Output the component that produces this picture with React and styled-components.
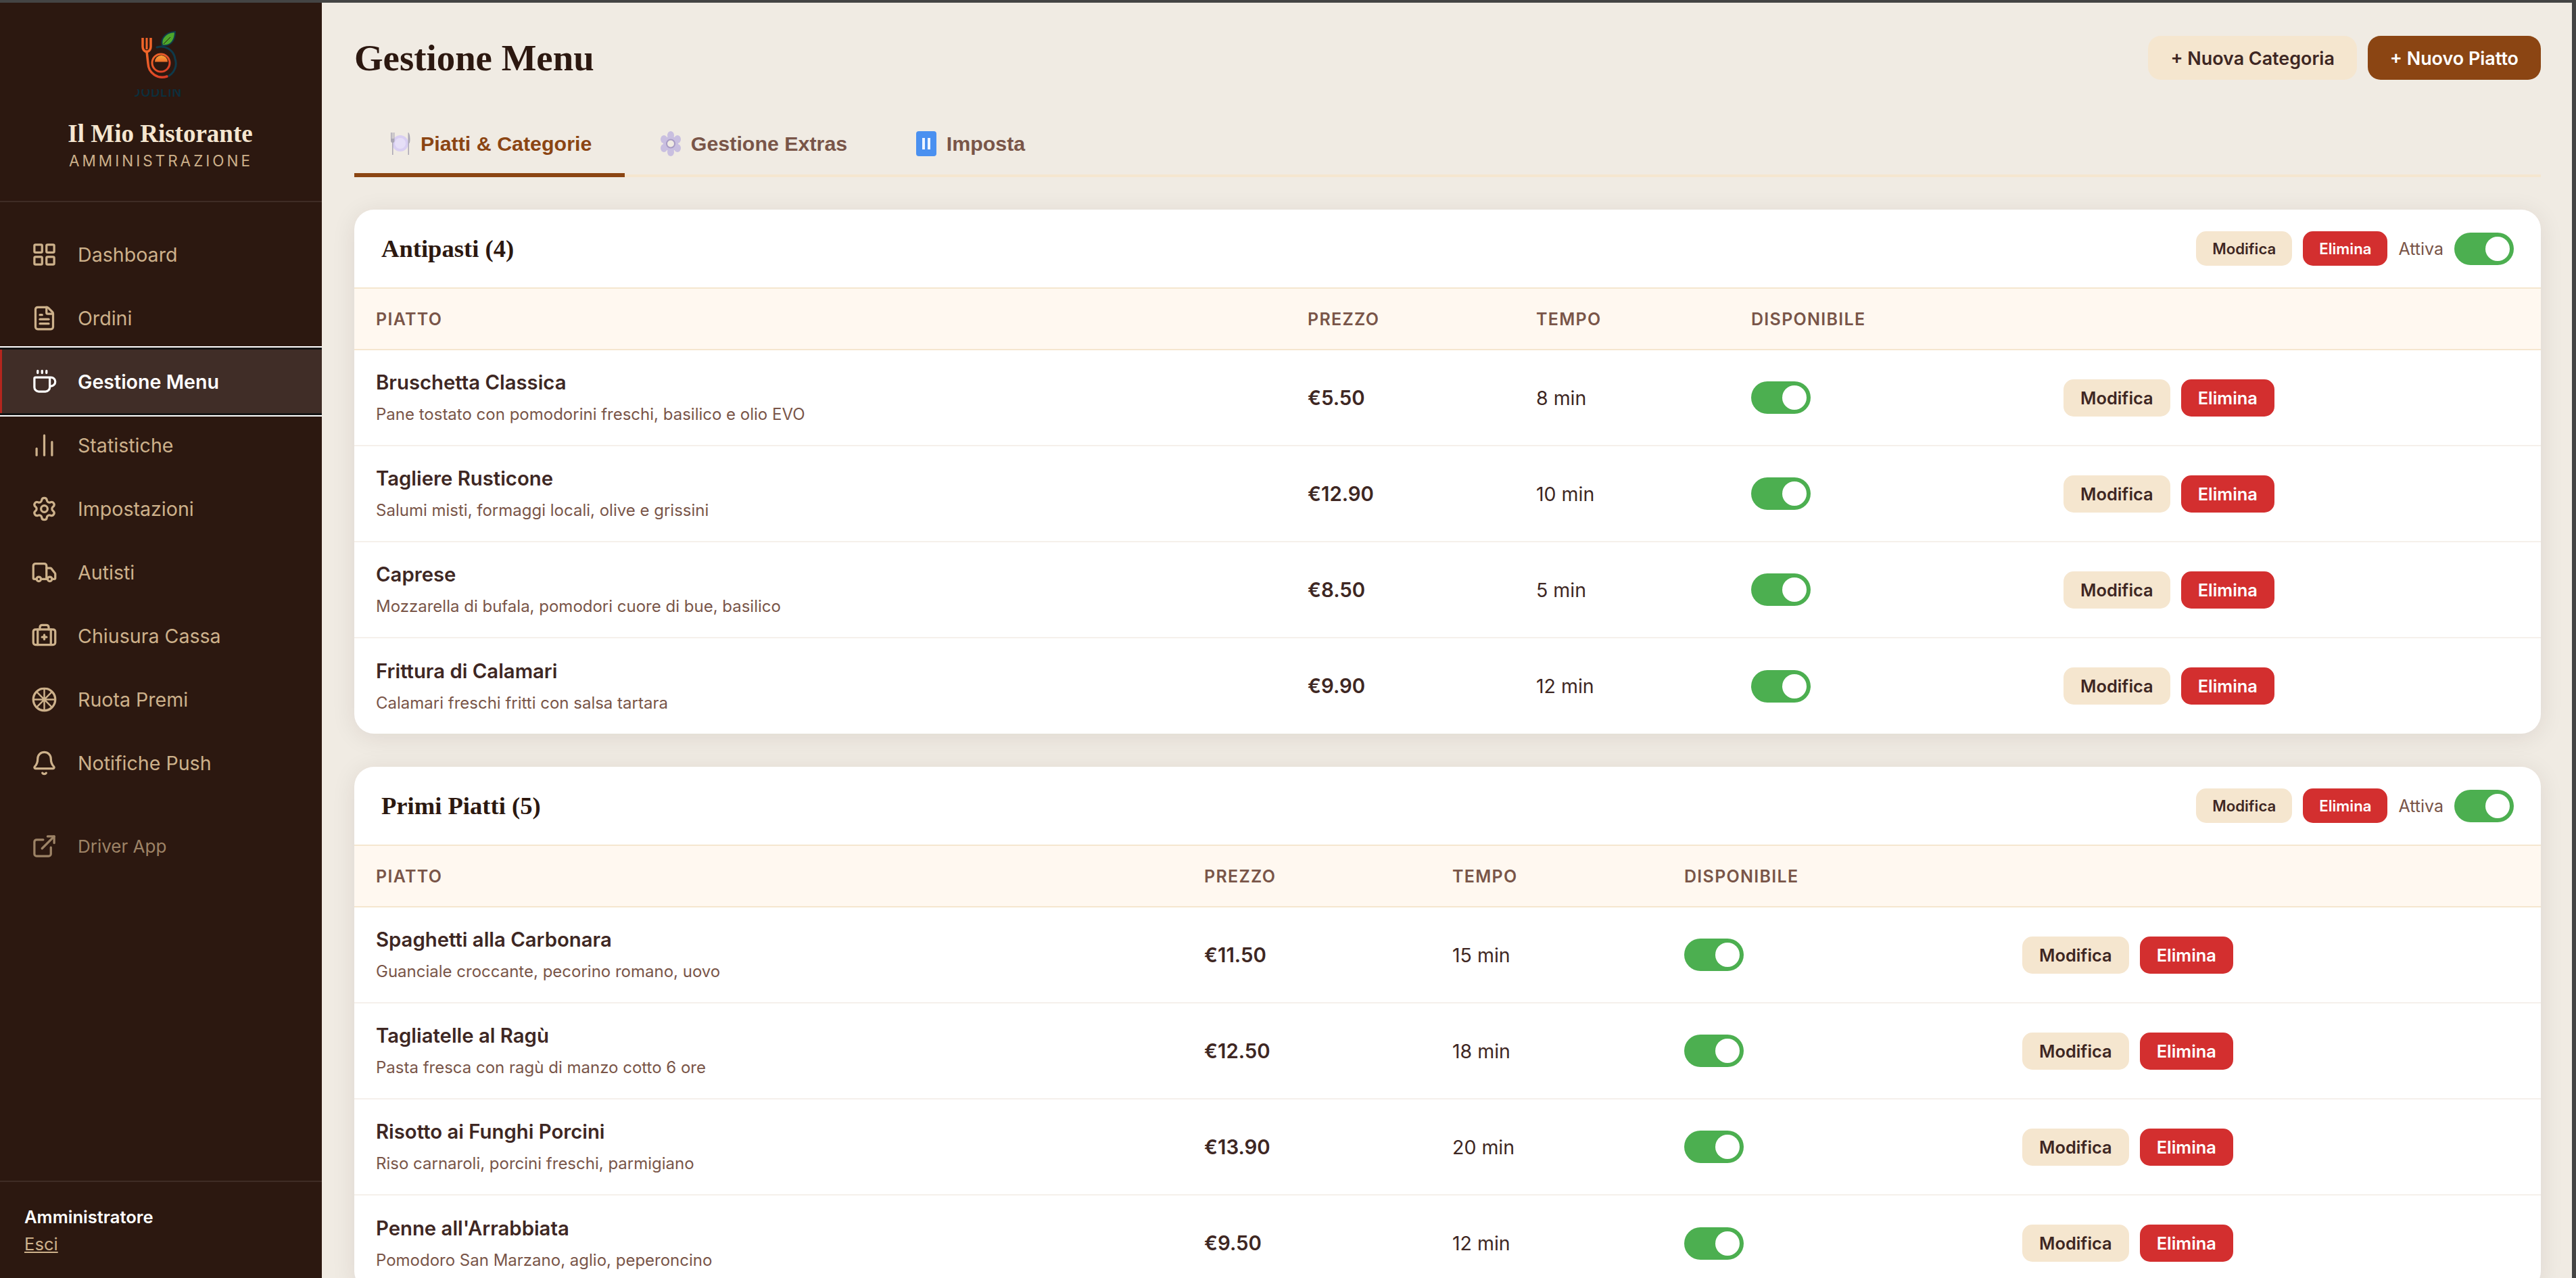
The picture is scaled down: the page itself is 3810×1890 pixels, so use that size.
import styled, { createGlobalStyle } from 'styled-components'
import {
  LayoutGrid,
  FileText,
  Coffee,
  ChartNoAxesColumn,
  Settings,
  Truck,
  BriefcaseMedical,
  Bell,
  ExternalLink,
} from 'lucide-react'

const GlobalStyle = createGlobalStyle`
  * { box-sizing: border-box; }
  html, body { margin: 0; padding: 0; height: 100%; background: #f0ebe3; }
  body { font-family: Inter, "Noto Sans", sans-serif; color: #2c1810; overflow: hidden; }
  #root { height: 100%; }
`

const Frame = styled.div`
  width: 3810px;
  height: 1890px;
  display: flex;
  flex-direction: column;
  overflow: hidden;
  border-top: 4px solid #444444;
  border-right: 6px solid #444444;
`

const Layout = styled.div`
  flex: 1;
  display: flex;
  min-height: 0;
`

const Sidebar = styled.aside`
  width: 476px;
  flex-shrink: 0;
  background: #2c1810;
  display: flex;
  flex-direction: column;
  overflow: hidden;
`

const Brand = styled.div`
  display: flex;
  flex-direction: column;
  align-items: center;
  padding: 26px 0 43px;
  border-bottom: 2px solid rgba(255, 255, 255, 0.09);
`

const BrandName = styled.div`
  font-family: "Liberation Serif", serif;
  font-weight: 700;
  font-size: 37px;
  line-height: 48px;
  margin: 24px 2px 0 0;
  color: #f5e6d0;
`

const BrandSub = styled.div`
  font-size: 22.5px;
  line-height: 32px;
  letter-spacing: 4px;
  color: #cdb18b;
`

const Nav = styled.nav`
  flex: 1;
  display: flex;
  flex-direction: column;
  padding-top: 30px;
`

const NavItem = styled.a`
  height: 94px;
  display: flex;
  align-items: center;
  gap: 30px;
  padding-left: ${props => (props.$active ? '43px' : '46px')};
  font-size: ${props => (props.$muted ? '26px' : '28.6px')};
  font-weight: ${props => (props.$active ? 600 : 400)};
  color: ${props => (props.$active ? '#ffffff' : '#cdb18b')};
  background: ${props => (props.$active ? '#402d27' : 'transparent')};
  border-left: ${props => (props.$active ? '3px solid #b3261e' : 'none')};
  margin-top: ${props => (props.$muted ? '29px' : '0')};
  opacity: ${props => (props.$muted ? 0.7 : 1)};
  ${props => (props.$active ? 'box-shadow: 0 0 0 3px #141414, 0 0 0 5px #ffffff; position: relative;' : '')}

  svg {
    width: 39px;
    height: 39px;
    flex-shrink: 0;
  }
`

const UserBox = styled.div`
  height: 144px;
  border-top: 2px solid rgba(255, 255, 255, 0.09);
  padding: 32px 36px 0;
`

const UserName = styled.div`
  font-size: 25.6px;
  font-weight: 600;
  line-height: 40px;
  color: #ffffff;
`

const Logout = styled.a`
  font-size: 25.6px;
  line-height: 40px;
  color: #cdb18b;
  text-decoration: underline;
`

const Main = styled.main`
  flex: 1;
  min-width: 0;
  padding: 49px 46px 0 48px;
  overflow: hidden;
`

const PageHeader = styled.div`
  display: flex;
  align-items: center;
  justify-content: space-between;
`

const PageTitle = styled.h1`
  margin: 0;
  font-family: "Liberation Serif", serif;
  font-weight: 700;
  font-size: 54.8px;
  line-height: 65px;
  color: #2c1810;
`

const HeaderActions = styled.div`
  display: flex;
  gap: 16px;
`

const Button = styled.button`
  height: 65px;
  border: none;
  border-radius: 19px;
  padding: 0 33px;
  font-family: Inter, sans-serif;
  font-size: 26.9px;
  font-weight: 600;
  background: ${props => (props.$primary ? '#8b4513' : '#f5e6cf')};
  color: ${props => (props.$primary ? '#ffffff' : '#3e2723')};
`

const SmallButton = styled.button`
  height: ${props => (props.$compact ? '51px' : '55px')};
  border: none;
  border-radius: 15px;
  padding: 0 ${props => (props.$compact ? '24px' : '25px')};
  font-family: Inter, sans-serif;
  font-size: ${props => (props.$compact ? '22.2px' : '25.4px')};
  font-weight: 600;
  background: ${props => (props.$danger ? '#d32f2f' : '#f5e6cf')};
  color: ${props => (props.$danger ? '#ffffff' : '#3e2723')};
`

const Tabs = styled.div`
  display: flex;
  margin: 52px 0 48px;
  border-bottom: 4px solid #f5e6cf;
`

const Tab = styled.button`
  height: 92px;
  margin-bottom: -4px;
  padding: 0 48.5px 2px 53px;
  border: none;
  border-bottom: 6px solid ${props => (props.$active ? '#8b4513' : 'transparent')};
  background: transparent;
  display: flex;
  align-items: center;
  gap: 15px;
  font-family: "Liberation Sans", Arial, sans-serif;
  font-size: 30.4px;
  font-weight: 700;
  color: ${props => (props.$active ? '#8b4513' : '#795548')};
`

const Card = styled.section`
  background: #ffffff;
  border-radius: 29px;
  box-shadow: 0 5px 36px rgba(44, 24, 16, 0.09);
  margin-bottom: 49px;
  overflow: hidden;
`

const CardHeader = styled.div`
  height: 117px;
  padding: 0 40px;
  display: flex;
  align-items: center;
  justify-content: space-between;
  border-bottom: 2px solid #f5e6cf;
`

const CardTitle = styled.h2`
  margin: 0;
  font-family: "Liberation Serif", serif;
  font-weight: 700;
  font-size: 36.6px;
  color: #2c1810;
`

const CardActions = styled.div`
  display: flex;
  align-items: center;
  gap: 16px;
`

const ActiveLabel = styled.span`
  font-size: 25px;
  color: #795548;
`

const Toggle = styled.span`
  width: 88px;
  height: 48px;
  border-radius: 24px;
  background: #4caf50;
  display: flex;
  align-items: center;
  justify-content: flex-end;
  padding-right: 6px;

  &::after {
    content: '';
    width: 36px;
    height: 36px;
    border-radius: 50%;
    background: #ffffff;
  }
`

const TableHead = styled.div`
  display: grid;
  grid-template-columns: ${props => props.$cols};
  height: 91px;
  align-items: center;
  background: #fff8f0;
  border-bottom: 2px solid #f5e6cf;
`

const HeadCell = styled.div`
  padding-left: 32px;
  font-size: 25px;
  font-weight: 600;
  letter-spacing: 1.3px;
  color: #795548;
`

const Row = styled.div`
  display: grid;
  grid-template-columns: ${props => props.$cols};
  height: 142px;
  align-items: center;
  border-bottom: 2px solid #f5f0eb;

  &:last-child {
    border-bottom: none;
    height: 141px;
  }
`

const Cell = styled.div`
  padding-left: 32px;
  display: flex;
  align-items: center;
  gap: 16px;
`

const DishInfo = styled.div`
  display: flex;
  flex-direction: column;
  gap: 14px;
`

const DishName = styled.div`
  font-size: 29.3px;
  font-weight: 600;
  line-height: 36px;
  color: #3e2723;
`

const DishDesc = styled.div`
  font-size: 24px;
  line-height: 30px;
  color: #795548;
`

const Price = styled.span`
  font-size: 29.4px;
  font-weight: 600;
  color: #3e2723;
`

const Time = styled.span`
  font-size: 28.5px;
  color: #3e2723;
`

function PlateEmoji() {
  return (
    <svg width="30" height="37" viewBox="0 0 30 37">
      <circle cx="15" cy="18" r="12" fill="#d9cff2" />
      <circle cx="15" cy="18" r="8" fill="#e6dff7" />
      <path d="M1 2v12c0 2 1 3 2 3v18h1.500V17c1 0 2-1 2-3V2H5.500v9H4.500V2h-1v9h-1V2z" fill="#aaa6b4" />
      <path d="M27 2c1.500 1 2.500 5 2.500 10s-1 6-1.500 6v17h-1.500V2z" fill="#aaa6b4" />
    </svg>
  )
}

function GearEmoji() {
  return (
    <svg width="30" height="37" viewBox="0 0 30 37">
      <g fill="#c9bfe0">
        <ellipse cx="15" cy="6" rx="5" ry="6" />
        <ellipse cx="15" cy="31" rx="5" ry="6" />
        <ellipse cx="5" cy="12" rx="5" ry="6" />
        <ellipse cx="25" cy="12" rx="5" ry="6" />
        <ellipse cx="5" cy="25" rx="5" ry="6" />
        <ellipse cx="25" cy="25" rx="5" ry="6" />
        <circle cx="15" cy="18.500" r="11" />
      </g>
      <circle cx="15" cy="18.500" r="6" fill="#f0ebe3" stroke="#a89cc4" strokeWidth="2" />
    </svg>
  )
}

function PauseEmoji() {
  return (
    <svg width="30" height="37" viewBox="0 0 30 37">
      <rect width="30" height="37" rx="4" fill="#4a90f0" />
      <rect x="9" y="10" width="4" height="17" fill="#eef4ff" />
      <rect x="17" y="10" width="4" height="17" fill="#eef4ff" />
    </svg>
  )
}

function WheelIcon() {
  return (
    <svg viewBox="0 0 24 24" fill="none" stroke="currentColor" strokeWidth="2" strokeLinecap="round">
      <circle cx="12" cy="12" r="10" />
      <path d="M12 2v20M2 12h20M4.900 4.900l14.200 14.200M19.100 4.900L4.900 19.100" strokeWidth="1.500" />
    </svg>
  )
}

function Logo() {
  return (
    <svg width="160" height="120" viewBox="0 0 160 120">
      <defs>
        <linearGradient id="ringGrad" x1="0" y1="0" x2="1" y2="1">
          <stop offset="0" stopColor="#f0682a" />
          <stop offset="1" stopColor="#d83a25" />
        </linearGradient>
        <linearGradient id="domeGrad" x1="0" y1="0" x2="0" y2="1">
          <stop offset="0" stopColor="#f8a536" />
          <stop offset="1" stopColor="#ee6f2b" />
        </linearGradient>
        <clipPath id="wordClip">
          <rect x="41" y="102" width="70" height="12" />
        </clipPath>
      </defs>
      <path d="M53 26v13q0 6 6 8v0q6-2 6-8V26" fill="none" stroke="#f2652a" strokeWidth="3.500" />
      <path d="M59 26v17" fill="none" stroke="#f2652a" strokeWidth="3" />
      <path d="M59 46l2 18a21 21 0 0 0 28 19" fill="none" stroke="url(#ringGrad)" strokeWidth="3.500" strokeLinecap="round" />
      <path d="M92 82a21 21 0 0 0 9-25a21 21 0 0 0-27-17" fill="none" stroke="#0f3a4a" strokeWidth="3" strokeLinecap="round" />
      <circle cx="80" cy="63" r="13" fill="none" stroke="url(#ringGrad)" strokeWidth="3" />
      <path d="M71 61.500a9.500 9.500 0 0 1 19 0z" fill="url(#domeGrad)" />
      <path d="M82 37c-3-10 5-19 19-20c0 13-7 22-19 20z" fill="#4da62c" stroke="#0f3a4a" strokeWidth="2" />
      <path d="M84 35l10-10" stroke="#2c1810" strokeWidth="1" />
      <text x="24" y="113" fontFamily="Inter, sans-serif" fontSize="18" fontWeight="600" letterSpacing="1" fill="#0c2f3d" clipPath="url(#wordClip)">FOODLINK</text>
    </svg>
  )
}

const navItems = [
  { label: 'Dashboard', icon: <LayoutGrid /> },
  { label: 'Ordini', icon: <FileText /> },
  { label: 'Gestione Menu', icon: <Coffee />, active: true },
  { label: 'Statistiche', icon: <ChartNoAxesColumn /> },
  { label: 'Impostazioni', icon: <Settings /> },
  { label: 'Autisti', icon: <Truck /> },
  { label: 'Chiusura Cassa', icon: <BriefcaseMedical /> },
  { label: 'Ruota Premi', icon: <WheelIcon /> },
  { label: 'Notifiche Push', icon: <Bell /> },
]

const categories = [
  {
    name: 'Antipasti (4)',
    cols: '1378px 338px 318px 462px 1fr',
    dishes: [
      { name: 'Bruschetta Classica', desc: 'Pane tostato con pomodorini freschi, basilico e olio EVO', price: '€5.50', time: '8 min' },
      { name: 'Tagliere Rusticone', desc: 'Salumi misti, formaggi locali, olive e grissini', price: '€12.90', time: '10 min' },
      { name: 'Caprese', desc: 'Mozzarella di bufala, pomodori cuore di bue, basilico', price: '€8.50', time: '5 min' },
      { name: 'Frittura di Calamari', desc: 'Calamari freschi fritti con salsa tartara', price: '€9.90', time: '12 min' },
    ],
  },
  {
    name: 'Primi Piatti (5)',
    cols: '1225px 367px 343px 500px 1fr',
    dishes: [
      { name: 'Spaghetti alla Carbonara', desc: 'Guanciale croccante, pecorino romano, uovo', price: '€11.50', time: '15 min' },
      { name: 'Tagliatelle al Ragù', desc: 'Pasta fresca con ragù di manzo cotto 6 ore', price: '€12.50', time: '18 min' },
      { name: 'Risotto ai Funghi Porcini', desc: 'Riso carnaroli, porcini freschi, parmigiano', price: '€13.90', time: '20 min' },
      { name: "Penne all'Arrabbiata", desc: 'Pomodoro San Marzano, aglio, peperoncino', price: '€9.50', time: '12 min' },
    ],
  },
]

export default function App() {
  return (
    <>
      <GlobalStyle />
      <Frame>
        <Layout>
          <Sidebar>
            <Brand>
              <Logo />
              <BrandName>Il Mio Ristorante</BrandName>
              <BrandSub>AMMINISTRAZIONE</BrandSub>
            </Brand>
            <Nav>
              {navItems.map(item => (
                <NavItem key={item.label} $active={item.active}>
                  {item.icon}
                  {item.label}
                </NavItem>
              ))}
              <NavItem $muted>
                <ExternalLink />
                Driver App
              </NavItem>
            </Nav>
            <UserBox>
              <UserName>Amministratore</UserName>
              <Logout>Esci</Logout>
            </UserBox>
          </Sidebar>
          <Main>
            <PageHeader>
              <PageTitle>Gestione Menu</PageTitle>
              <HeaderActions>
                <Button>+ Nuova Categoria</Button>
                <Button $primary>+ Nuovo Piatto</Button>
              </HeaderActions>
            </PageHeader>
            <Tabs>
              <Tab $active><PlateEmoji />Piatti &amp; Categorie</Tab>
              <Tab><GearEmoji />Gestione Extras</Tab>
              <Tab><PauseEmoji />Imposta</Tab>
            </Tabs>
            {categories.map(cat => (
              <Card key={cat.name}>
                <CardHeader>
                  <CardTitle>{cat.name}</CardTitle>
                  <CardActions>
                    <SmallButton $compact>Modifica</SmallButton>
                    <SmallButton $compact $danger>Elimina</SmallButton>
                    <ActiveLabel>Attiva</ActiveLabel>
                    <Toggle />
                  </CardActions>
                </CardHeader>
                <TableHead $cols={cat.cols}>
                  <HeadCell>PIATTO</HeadCell>
                  <HeadCell>PREZZO</HeadCell>
                  <HeadCell>TEMPO</HeadCell>
                  <HeadCell>DISPONIBILE</HeadCell>
                  <HeadCell />
                </TableHead>
                {cat.dishes.map(dish => (
                  <Row key={dish.name} $cols={cat.cols}>
                    <Cell>
                      <DishInfo>
                        <DishName>{dish.name}</DishName>
                        <DishDesc>{dish.desc}</DishDesc>
                      </DishInfo>
                    </Cell>
                    <Cell><Price>{dish.price}</Price></Cell>
                    <Cell><Time>{dish.time}</Time></Cell>
                    <Cell><Toggle /></Cell>
                    <Cell>
                      <SmallButton>Modifica</SmallButton>
                      <SmallButton $danger>Elimina</SmallButton>
                    </Cell>
                  </Row>
                ))}
              </Card>
            ))}
          </Main>
        </Layout>
      </Frame>
    </>
  )
}
